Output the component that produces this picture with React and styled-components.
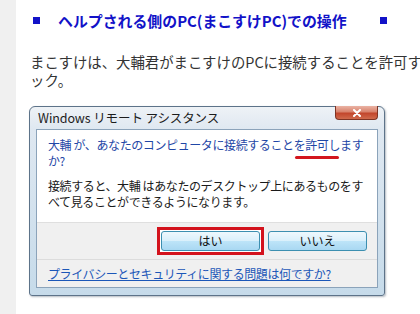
import React from 'react'
import styled, { createGlobalStyle } from 'styled-components';

const GlobalStyle = createGlobalStyle`
    html, body {
        margin: 0;
        padding: 0;
        background: #ffffff;
        overflow: hidden;
    }
    body {
        font-family: "Noto Sans CJK JP", "Noto Sans", sans-serif;
    }
    * {
        box-sizing: border-box;
    }
`;

const Page = styled.div`
    display: flex;
    width: 420px;
    height: 314px;
`;
const Side = styled.div`
    width: 16px;
    flex: none;
    background: #f0f0f0;
`;
const Main = styled.div`
    flex: 1;
    min-width: 0;
    padding-top: 10px;
    overflow: hidden;
`;
const Heading = styled.h2`
    display: flex;
    align-items: center;
    margin: 0;
    padding-left: 17px;
    height: 20px;
    font-size: 14.9px;
    font-weight: 700;
    color: #1212c8;
    white-space: nowrap;
`;
const Square = styled.span`
    display: inline-block;
    flex: none;
    width: 7px;
    height: 7px;
    background: #1212c8;
    margin-right: ${props => props.gapRight || 0}px;
    margin-left: ${props => props.gapLeft || 0}px;
`;
const Para = styled.p`
    margin: 23px 0 0 0;
    padding-left: 14px;
    font-size: 14.4px;
    line-height: 18px;
    color: #333333;
    white-space: nowrap;
`;
const DialogFrame = styled.div`
    margin: 17px 0 0 13px;
    width: 356px;
    border: 1px solid #5d7389;
    border-radius: 6px 6px 3px 3px;
    background: linear-gradient(to bottom, #eef2f6 0px, #dfe8f1 22px, #c6dbea 100%);
    box-shadow: 1px 1px 2px rgba(40, 60, 80, 0.35);
    padding: 0 6px 7px 6px;
`;
const TitleBar = styled.div`
    display: flex;
    justify-content: space-between;
    align-items: flex-start;
    height: 22px;
`;
const Title = styled.span`
    padding: 3px 0 0 2px;
    font-size: 12.5px;
    line-height: 16px;
    color: #1c1c1c;
    letter-spacing: -0.1px;
`;
const CloseButton = styled.div`
    display: flex;
    align-items: center;
    justify-content: center;
    width: 43px;
    height: 14px;
    margin-top: -1px;
    border: 1px solid #7e3424;
    border-top: none;
    border-radius: 0 0 4px 4px;
    background: linear-gradient(to bottom, #eab3a4 0%, #d8826c 45%, #c2462c 55%, #d06a4c 100%);
`;
const Panel = styled.div`
    border: 1px solid #8ba3ba;
    background: #f0f0f0;
`;
const Content = styled.div`
    background: #ffffff;
    padding: 7px 10px 12px 11px;
    border-bottom: 1px solid #dfdfdf;
`;
const Instruction = styled.div`
    font-size: 12px;
    line-height: 16px;
    letter-spacing: -0.4px;
    color: #1f47a6;
    white-space: nowrap;
`;
const Marked = styled.span`
    position: relative;
    &::after {
        content: "";
        position: absolute;
        left: 1px;
        width: 44px;
        bottom: -6px;
        height: 3px;
        border-radius: 2px;
        background: #d3161e;
    }
`;
const Body = styled.div`
    margin-top: 9px;
    font-size: 12px;
    line-height: 16px;
    letter-spacing: -0.4px;
    color: #1a1a1a;
    white-space: nowrap;
`;
const ButtonRow = styled.div`
    display: flex;
    justify-content: flex-end;
    align-items: center;
    gap: 4px;
    height: 37px;
    padding-right: 10px;
    border-bottom: 1px solid #dcdcdc;
`;
const Highlight = styled.span`
    display: inline-flex;
    border: 3px solid #d3121c;
    padding: 1px;
    background: #ffffff;
`;
const Button = styled.button`
    width: 99px;
    height: 20px;
    padding: 0;
    border: 1px solid #3c8fb0;
    border-radius: 3px;
    background: linear-gradient(to bottom, #eef8fd 0%, #daf0fb 48%, #bde4f8 52%, #a9d8f2 100%);
    font-family: "Noto Sans CJK JP", "Noto Sans", sans-serif;
    font-size: 12px;
    line-height: 18px;
    color: #111111;
`;
const LinkRow = styled.div`
    display: flex;
    align-items: center;
    height: 27px;
    padding-left: 11px;
`;
const Link = styled.a`
    font-size: 12px;
    letter-spacing: -0.4px;
    color: #1c57b8;
    text-decoration: underline;
    white-space: nowrap;
`;

export default function App() {
    return (
        <Page>
            <GlobalStyle />
            <Side />
            <Main>
                <Heading>
                    <Square gapRight={18} />
                    ヘルプされる側のPC(まこすけPC)での操作
                    <Square gapLeft={33} />
                </Heading>
                <Para>
                    まこすけは、大輔君がまこすけのPCに接続することを許可するので「はい」をクリ<br />
                    ック。
                </Para>
                <DialogFrame>
                    <TitleBar>
                        <Title>Windows リモート アシスタンス</Title>
                        <CloseButton>
                            <svg width="10" height="8" viewBox="0 0 10 8">
                                <path d="M2 1 L8 7 M8 1 L2 7" stroke="#ffffff" strokeWidth="2" strokeLinecap="round" />
                            </svg>
                        </CloseButton>
                    </TitleBar>
                    <Panel>
                        <Content>
                            <Instruction>
                                大輔 が、あなたのコンピュータに接続すること<Marked>を許可し</Marked>ます<br />
                                か?
                            </Instruction>
                            <Body>
                                接続すると、大輔 はあなたのデスクトップ上にあるものをす<br />
                                べて見ることができるようになります。
                            </Body>
                        </Content>
                        <ButtonRow>
                            <Highlight>
                                <Button>はい</Button>
                            </Highlight>
                            <Button>いいえ</Button>
                        </ButtonRow>
                        <LinkRow>
                            <Link href="#">プライバシーとセキュリティに関する問題は何ですか?</Link>
                        </LinkRow>
                    </Panel>
                </DialogFrame>
            </Main>
        </Page>
    )
}
